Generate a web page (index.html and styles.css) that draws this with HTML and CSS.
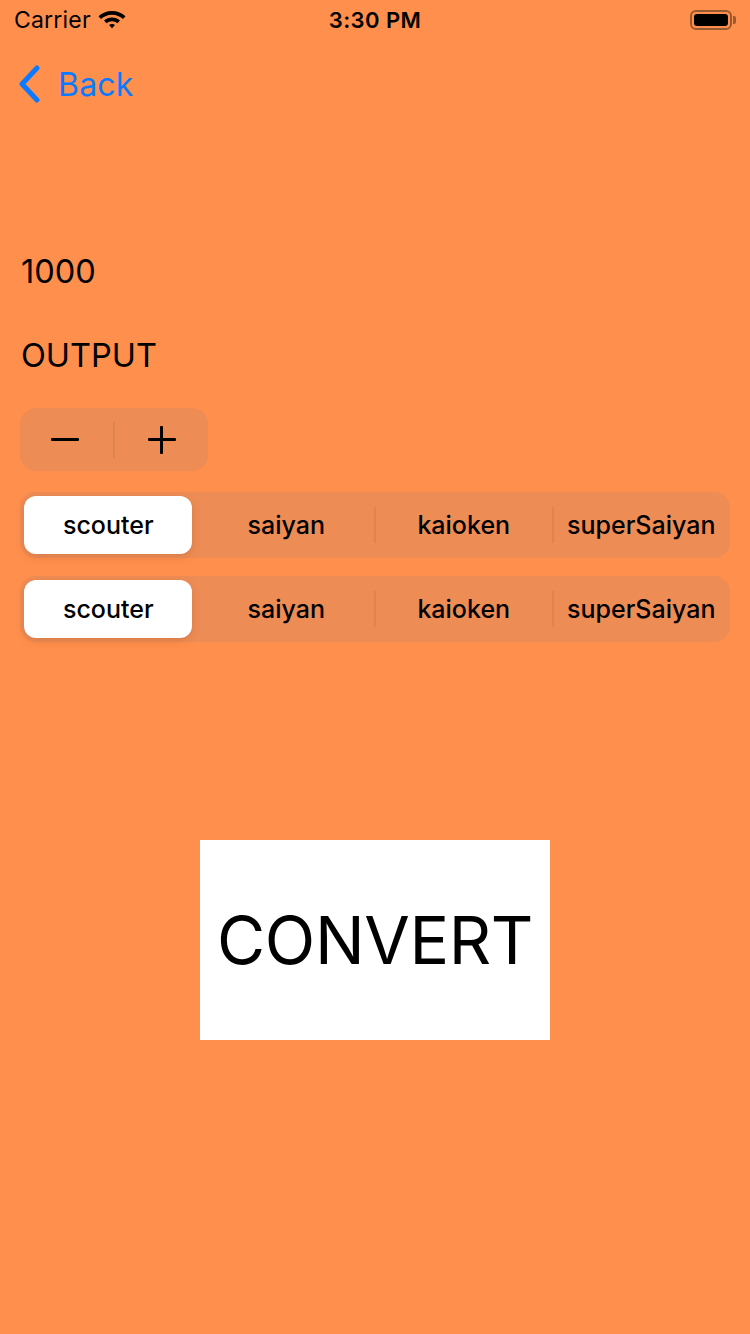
FILE: index.html
```html
<!DOCTYPE html>
<html>
<head>
<meta charset="utf-8">
<link rel="stylesheet" href="styles.css">
</head>
<body>
<div class="screen">
  <div class="status">
    <div class="status-left">
      <span class="carrier">Carrier</span>
      <svg class="wifi" width="30" height="22" viewBox="0 0 30 22">
        <path d="M15 3C9.6 3 5 5 1.5 8.3L4 11C6.9 8.3 10.8 6.7 15 6.7S23.1 8.3 26 11L28.5 8.3C25 5 20.4 3 15 3Z" fill="#000"/>
        <path d="M15 9.5C11.9 9.5 9.1 10.7 7 12.6L9.6 15.3C11 14 12.9 13.2 15 13.2S19 14 20.4 15.3L23 12.6C20.9 10.7 18.1 9.5 15 9.5Z" fill="#000"/>
        <path d="M15 16C13.8 16 12.8 16.4 12 17.1L15 20.3L18 17.1C17.2 16.4 16.2 16 15 16Z" fill="#000"/>
      </svg>
    </div>
    <div class="time">3:30 PM</div>
    <div class="status-right">
      <div class="battery"><div class="battery-fill"></div></div>
      <div class="battery-tip"></div>
    </div>
  </div>
  <div class="nav">
    <div class="back">
      <svg class="chevron" width="26" height="38" viewBox="0 0 26 38">
        <path d="M20 3L5 19L20 35" fill="none" stroke="#0A7AFF" stroke-width="5" stroke-linecap="round" stroke-linejoin="round"/>
      </svg>
      <span class="back-text">Back</span>
    </div>
  </div>
  <div class="content">
    <div class="label value">1000</div>
    <div class="label output">OUTPUT</div>
    <div class="stepper">
      <div class="step"><span class="minus"></span></div>
      <div class="step-divider"></div>
      <div class="step"><span class="plus"></span></div>
    </div>
    <div class="segmented">
      <div class="seg"><span class="seg-pill">scouter</span></div>
      <div class="seg">saiyan</div>
      <div class="seg sep">kaioken</div>
      <div class="seg sep">superSaiyan</div>
    </div>
    <div class="segmented second">
      <div class="seg"><span class="seg-pill">scouter</span></div>
      <div class="seg">saiyan</div>
      <div class="seg sep">kaioken</div>
      <div class="seg sep">superSaiyan</div>
    </div>
    <div class="convert-wrap">
      <div class="convert">CONVERT</div>
    </div>
  </div>
</div>
</body>
</html>
```
FILE: styles.css
```css
* { box-sizing: border-box; }
html, body {
  margin: 0;
  padding: 0;
  width: 750px;
  height: 1334px;
  background: #FF8F4C;
  font-family: Inter, "Noto Sans", Roboto, sans-serif;
  color: #000;
  overflow: hidden;
}
.screen { width: 750px; height: 1334px; }
.status {
  height: 40px;
  display: flex;
  align-items: center;
  justify-content: space-between;
  padding: 0 14px 0 14px;
}
.status-left { display: flex; align-items: center; gap: 6px; width: 200px; }
.carrier { font-size: 23px; letter-spacing: 0.2px; }
.wifi { margin-top: -2px; }
.time { font-size: 22px; font-weight: 600; letter-spacing: 0.4px; }
.status-right { display: flex; align-items: center; justify-content: flex-end; width: 200px; gap: 1px; }
.battery {
  width: 42px; height: 20px;
  border: 2px solid #9a5a30;
  border-radius: 6px;
  padding: 2px;
}
.battery-fill { width: 100%; height: 100%; background: #000; border-radius: 3px; }
.battery-tip { width: 3px; height: 8px; background: #9a5a30; border-radius: 0 2px 2px 0; }

.nav { height: 88px; display: flex; align-items: center; padding-left: 17px; }
.back { display: flex; align-items: center; gap: 15px; margin-top: 0; }
.back-text { font-size: 32px; color: #0A7AFF; letter-spacing: 0.2px; }

.content { padding: 0 20px 0 20px; }
.label { font-size: 32.5px; padding-left: 1px; line-height: 40px; }
.value { margin-top: 124px; }
.output { margin-top: 44px; }

.stepper {
  margin-top: 32px;
  width: 188px; height: 63px;
  background: #EE8C55;
  border-radius: 16px;
  display: flex;
  align-items: center;
}
.step { flex: 1; height: 100%; display: flex; align-items: center; justify-content: center; }
.step-divider { width: 2px; height: 36px; background: #DE8450; }
.minus { display: block; width: 28px; height: 3px; background: #000; border-radius: 1px; margin-left: -4px; }
.plus { display: block; width: 28px; height: 28px; position: relative; }
.plus::before, .plus::after { content: ""; position: absolute; background: #000; border-radius: 1px; }
.plus::before { left: 0; top: 12.5px; width: 28px; height: 3px; }
.plus::after { left: 12.5px; top: 0; width: 3px; height: 28px; }

.segmented {
  margin-top: 21px;
  width: 710px; height: 66px;
  background: #EE8C55;
  border-radius: 16px;
  display: grid;
  grid-template-columns: repeat(4, 1fr);
  align-items: center;
}
.segmented.second { margin-top: 18px; }
.seg {
  height: 66px;
  display: flex; align-items: center; justify-content: center;
  font-size: 25px;
  font-weight: 500;
  letter-spacing: 0;
  position: relative;
}
.seg.sep::before {
  content: "";
  position: absolute;
  left: -1px; top: 15px;
  width: 2px; height: 36px;
  background: #DE8450;
}
.seg-pill {
  width: 168px; height: 58px;
  margin-left: -1px;
  display: flex; align-items: center; justify-content: center;
  background: #fff;
  border-radius: 12px;
  box-shadow: 0 3px 8px rgba(120, 60, 20, 0.18), 0 0 1px rgba(0,0,0,0.06);
}

.convert-wrap { display: flex; justify-content: center; margin-top: 198px; }
.convert {
  width: 350px; height: 200px;
  background: #fff;
  display: flex; align-items: center; justify-content: center;
  font-size: 66px;
  letter-spacing: -0.4px;
}
```
